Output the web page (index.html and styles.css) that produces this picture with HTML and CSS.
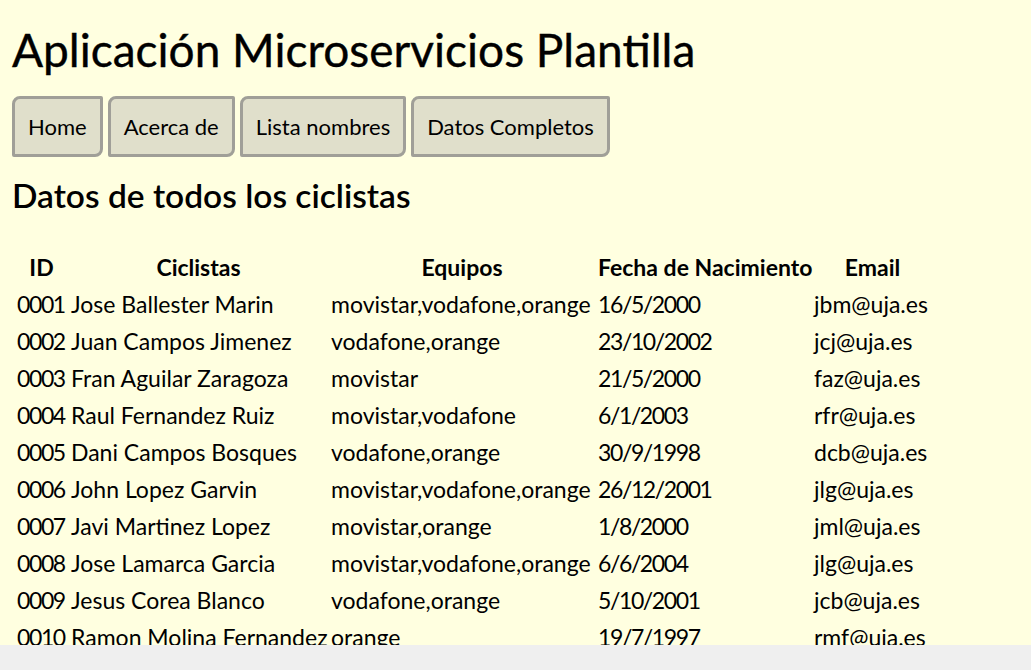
FILE: index.html
```html
<!DOCTYPE html>
<html lang="es">
<head>
<meta charset="utf-8">
<title>Aplicación Microservicios Plantilla</title>
<link rel="stylesheet" href="styles.css">
</head>
<body>
<h1 class="title">Aplicación Microservicios Plantilla</h1>
<nav class="menu">
  <button class="menu-btn">Home</button>
  <button class="menu-btn">Acerca de</button>
  <button class="menu-btn">Lista nombres</button>
  <button class="menu-btn">Datos Completos</button>
</nav>
<h2 class="subtitle">Datos de todos los ciclistas</h2>
<table class="data">
  <colgroup>
    <col class="c-id"><col class="c-name"><col class="c-team"><col class="c-date"><col class="c-mail">
  </colgroup>
  <thead>
    <tr><th>ID</th><th>Ciclistas</th><th>Equipos</th><th>Fecha de Nacimiento</th><th>Email</th></tr>
  </thead>
  <tbody>
    <tr><td class="num">0001</td><td>Jose Ballester Marin</td><td>movistar,vodafone,orange</td><td class="num">16/5/2000</td><td>jbm@uja.es</td></tr>
    <tr><td class="num">0002</td><td>Juan Campos Jimenez</td><td>vodafone,orange</td><td class="num">23/10/2002</td><td>jcj@uja.es</td></tr>
    <tr><td class="num">0003</td><td>Fran Aguilar Zaragoza</td><td>movistar</td><td class="num">21/5/2000</td><td>faz@uja.es</td></tr>
    <tr><td class="num">0004</td><td>Raul Fernandez Ruiz</td><td>movistar,vodafone</td><td class="num">6/1/2003</td><td>rfr@uja.es</td></tr>
    <tr><td class="num">0005</td><td>Dani Campos Bosques</td><td>vodafone,orange</td><td class="num">30/9/1998</td><td>dcb@uja.es</td></tr>
    <tr><td class="num">0006</td><td>John Lopez Garvin</td><td>movistar,vodafone,orange</td><td class="num">26/12/2001</td><td>jlg@uja.es</td></tr>
    <tr><td class="num">0007</td><td>Javi Martinez Lopez</td><td>movistar,orange</td><td class="num">1/8/2000</td><td>jml@uja.es</td></tr>
    <tr><td class="num">0008</td><td>Jose Lamarca Garcia</td><td>movistar,vodafone,orange</td><td class="num">6/6/2004</td><td>jlg@uja.es</td></tr>
    <tr><td class="num">0009</td><td>Jesus Corea Blanco</td><td>vodafone,orange</td><td class="num">5/10/2001</td><td>jcb@uja.es</td></tr>
    <tr><td class="num">0010</td><td>Ramon Molina Fernandez</td><td>orange</td><td class="num">19/7/1997</td><td>rmf@uja.es</td></tr>
  </tbody>
</table>
</body>
</html>
```
FILE: styles.css
```css
html {
  margin: 0;
  padding: 0;
  background: #efefef;
}
body {
  margin: 0;
  padding: 0 12px;
  height: 645px;
  box-sizing: border-box;
  background: #ffffe0;
  font-family: Lato, "Liberation Sans", sans-serif;
  color: #000;
}
.title {
  margin: 0;
  padding-top: 24px;
  font-size: 46px;
  font-weight: 400;
  line-height: 52px;
  -webkit-text-stroke: 0.4px #000;
}
.menu {
  display: flex;
  gap: 5px;
  margin-top: 20px;
}
.menu-btn {
  font-family: inherit;
  font-size: 22px;
  color: #000;
  background: #e0dfcb;
  border: 3px solid #a09f98;
  border-radius: 8px 2px 8px 2px;
  height: 61px;
  padding: 0 13px;
}
.subtitle {
  margin: 18px 0 0;
  font-size: 33.5px;
  font-weight: 600;
  line-height: 40px;
}
.data {
  margin-top: 31px;
  border-collapse: collapse;
  table-layout: fixed;
  width: 919px;
  font-size: 23px;
}
.c-id { width: 54px; }
.c-name { width: 260px; }
.c-team { width: 267px; }
.c-date { width: 216px; }
.c-mail { width: 122px; }
.data th, .data td {
  height: 37px;
  padding: 0 0 0 5px;
  white-space: nowrap;
}
.data th {
  font-weight: 700;
  text-align: center;
  padding-top: 2px;
}
.data td {
  text-align: left;
}
.data td.num {
  letter-spacing: -1.4px;
}
```
